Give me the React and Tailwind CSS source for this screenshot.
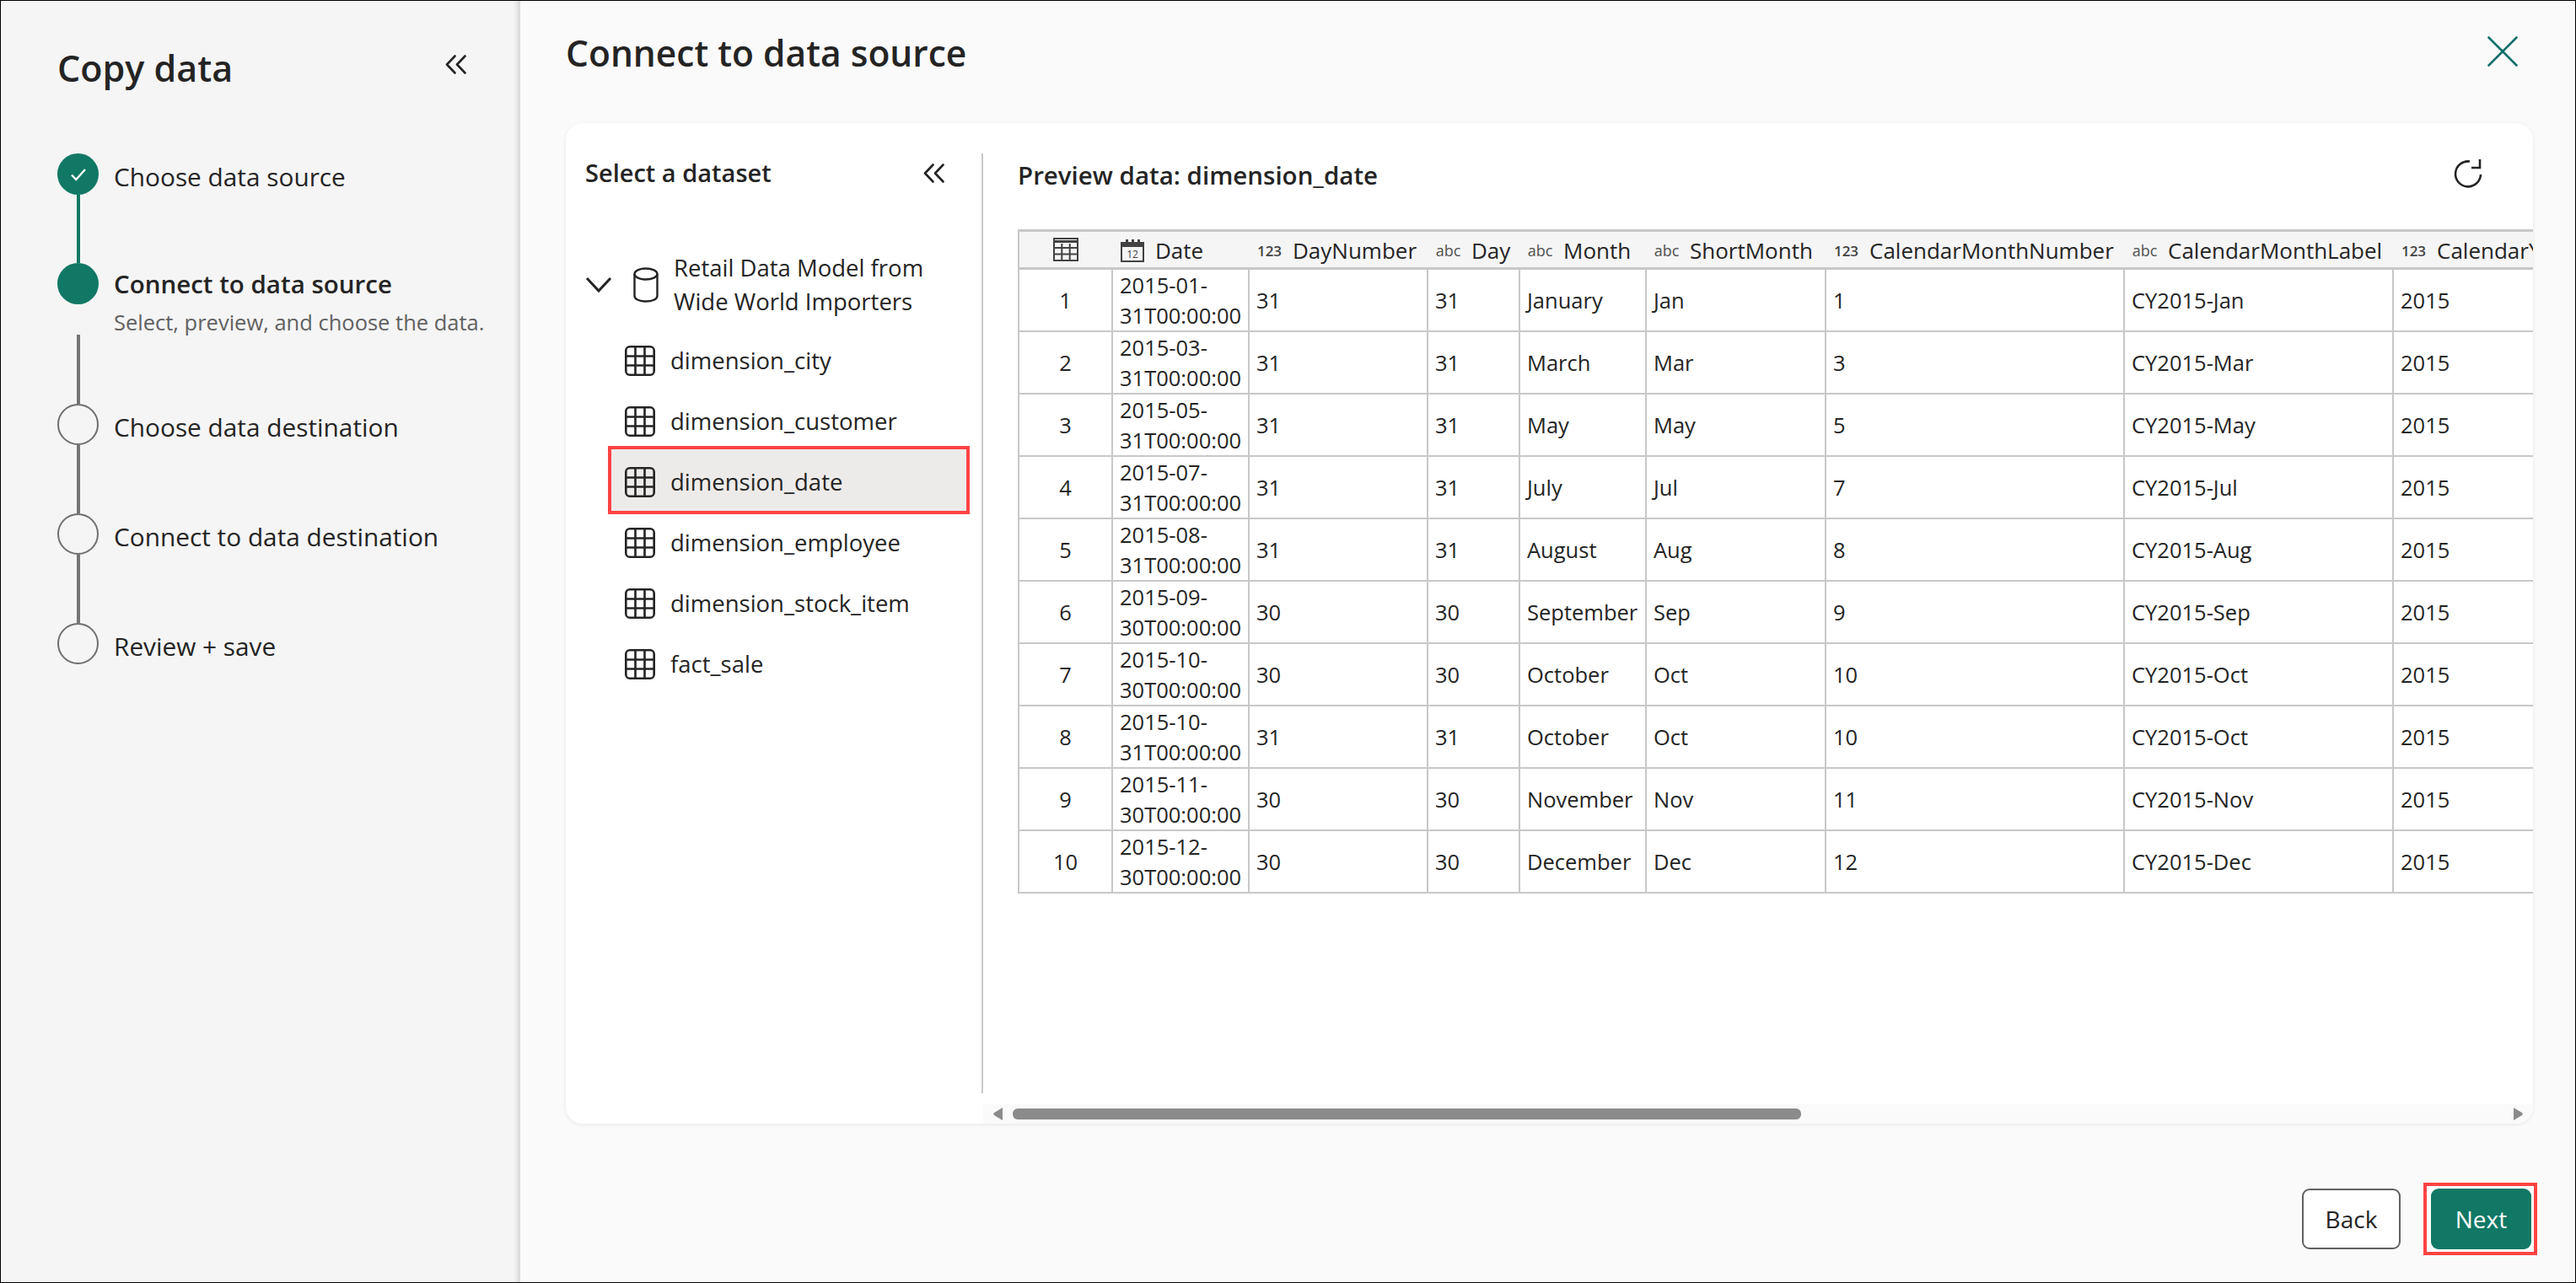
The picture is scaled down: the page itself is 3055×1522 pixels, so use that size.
const font = { fontFamily: '"Open Sans", "Noto Sans", sans-serif' }

const columns = [
  { w: 'w-[111px]' },
  { w: 'w-[162px]', label: 'Date', icon: 'date' },
  { w: 'w-[212px]', label: 'DayNumber', icon: '123' },
  { w: 'w-[109px]', label: 'Day', icon: 'abc' },
  { w: 'w-[150px]', label: 'Month', icon: 'abc' },
  { w: 'w-[213px]', label: 'ShortMonth', icon: 'abc' },
  { w: 'w-[354px]', label: 'CalendarMonthNumber', icon: '123' },
  { w: 'w-[319px]', label: 'CalendarMonthLabel', icon: 'abc' },
  { w: 'w-[260px]', label: 'CalendarYear', icon: '123' },
]

const rows = [
  ['2015-01-', '31T00:00:00', '31', '31', 'January', 'Jan', '1', 'CY2015-Jan'],
  ['2015-03-', '31T00:00:00', '31', '31', 'March', 'Mar', '3', 'CY2015-Mar'],
  ['2015-05-', '31T00:00:00', '31', '31', 'May', 'May', '5', 'CY2015-May'],
  ['2015-07-', '31T00:00:00', '31', '31', 'July', 'Jul', '7', 'CY2015-Jul'],
  ['2015-08-', '31T00:00:00', '31', '31', 'August', 'Aug', '8', 'CY2015-Aug'],
  ['2015-09-', '30T00:00:00', '30', '30', 'September', 'Sep', '9', 'CY2015-Sep'],
  ['2015-10-', '30T00:00:00', '30', '30', 'October', 'Oct', '10', 'CY2015-Oct'],
  ['2015-10-', '31T00:00:00', '31', '31', 'October', 'Oct', '10', 'CY2015-Oct'],
  ['2015-11-', '30T00:00:00', '30', '30', 'November', 'Nov', '11', 'CY2015-Nov'],
  ['2015-12-', '30T00:00:00', '30', '30', 'December', 'Dec', '12', 'CY2015-Dec'],
]

const datasets = ['dimension_city', 'dimension_customer', 'dimension_date', 'dimension_employee', 'dimension_stock_item', 'fact_sale']

function DoubleChevron() {
  return (
    <svg width="25" height="23" viewBox="0 0 25 23" fill="none" stroke="#242424" strokeWidth="2.6" strokeLinecap="round" strokeLinejoin="round">
      <path d="M11.5 1.5 2 11.5l9.5 10" />
      <path d="M23.5 1.5 14 11.5l9.5 10" />
    </svg>
  )
}

function GridIcon() {
  return (
    <svg width="36" height="36" viewBox="0 0 36 36" fill="none" stroke="#242424" strokeWidth="2.6" className="shrink-0">
      <rect x="1.3" y="1.3" width="33.4" height="33.4" rx="4.5" />
      <path d="M12.5 1.5v33M23.5 1.5v33M1.5 12.5h33M1.5 23.5h33" />
    </svg>
  )
}

function Step({ state, label, sub, line, gap }) {
  const done = state === 'done' || state === 'active'
  return (
    <div className={`flex gap-[18px] ${sub ? 'h-[167px]' : line ? 'h-[130px]' : 'h-[49px]'}`}>
      <div className="flex w-[49px] shrink-0 flex-col items-center">
        {done ? (
          <div className="flex h-[49px] w-[49px] shrink-0 items-center justify-center rounded-full bg-[#117865]">
            {state === 'done' && (
              <svg width="20" height="16" viewBox="0 0 20 16" fill="none" stroke="#fff" strokeWidth="2.4">
                <path d="M2 8.5 7.2 14 18 2" />
              </svg>
            )}
          </div>
        ) : (
          <div className="h-[49px] w-[49px] shrink-0 rounded-full border-2 border-[#6f6f6f]" />
        )}
        {line && <div className={`w-[4px] flex-1 ${gap ? 'mt-[36px]' : ''} ${state === 'done' ? 'bg-[#117865]' : 'bg-[#757575]'}`} />}
      </div>
      <div className={sub ? '' : 'pt-[3px]'}>
        <div className={`h-[49px] leading-[49px] text-[#242424] ${state === 'active' ? 'text-[29.5px] font-semibold' : 'text-[29.8px]'}`}>{label}</div>
        {sub && <div className="text-[25.5px] leading-[42px] text-[#616161]">{sub}</div>}
      </div>
    </div>
  )
}

function HeaderIcon({ kind }) {
  if (kind === 'date') {
    return (
      <svg width="28" height="28" viewBox="0 0 28 28" className="mr-[13px] ml-[1px] shrink-0">
        <path d="M1 5h26v22H1z" fill="none" stroke="#424242" strokeWidth="2" />
        <path d="M1 5h26v5H1z" fill="#424242" />
        <path d="M6 1h3v4H6zM13 1h3v4h-3zM20 1h3v4h-3z" fill="#424242" />
        <text x="14" y="23" textAnchor="middle" fontSize="12" fill="#424242" fontFamily="Open Sans">12</text>
      </svg>
    )
  }
  return <span className={`mr-[12px] w-[31px] shrink-0 leading-none ${kind === '123' ? 'text-[17px] font-semibold text-[#424242]' : 'text-[18px] font-normal text-[#505050]'}`}>{kind}</span>
}

function Preview() {
  return (
    <table className="w-[1890px] table-fixed border-collapse">
      <colgroup>
        {columns.map((c, i) => <col key={i} className={c.w} />)}
      </colgroup>
      <thead>
        <tr className="h-[45px] bg-[#f5f5f5]">
          {columns.map((c, i) => (
            <th key={i} className={`border-y-[3px] border-[#c8c8c8] p-0 font-medium ${i === 0 ? 'border-l-2' : ''}`}>
              {c.label ? (
                <div className="flex items-center whitespace-nowrap pt-[2px] pl-[9px] text-[26px] text-[#242424]">
                  <HeaderIcon kind={c.icon} />
                  {c.label}
                </div>
              ) : (
                <div className="flex justify-center">
                  <svg width="30" height="28" viewBox="0 0 30 28" fill="none" stroke="#424242" strokeWidth="2">
                    <path d="M1 1h28v26H1z" />
                    <path d="M1 4.5h28" strokeWidth="3" fill="none" />
                    <path d="M1 12h28M1 19.500h28M10.300 7v20M19.700 7v20" />
                  </svg>
                </div>
              )}
            </th>
          ))}
        </tr>
      </thead>
      <tbody>
        {rows.map((r, i) => (
          <tr key={i} className="h-[74px] text-[25.5px] text-[#242424]">
            <td className="border-2 border-[#c8c8c8] p-0 text-center">{i + 1}</td>
            <td className="border-2 border-[#c8c8c8] px-[8px] py-0 leading-[36px] whitespace-nowrap">{r[0]}<br />{r[1]}</td>
            {r.slice(2).map((v, j) => (
              <td key={j} className="border-2 border-[#c8c8c8] px-[8px] py-0 whitespace-nowrap">{v}</td>
            ))}
            <td className="border-2 border-[#c8c8c8] px-[8px] py-0">2015</td>
          </tr>
        ))}
      </tbody>
    </table>
  )
}

export default function App() {
  return (
    <div className="box-border flex h-[1522px] w-[3055px] overflow-hidden border border-black bg-[#fafafa]" style={font}>
      <aside className="w-[616px] shrink-0 bg-[#f5f5f5] pl-[67px] shadow-[inset_-7px_0_6px_-4px_rgba(0,0,0,0.14)]">
        <div className="flex h-[129px] items-start justify-between pr-[64px]">
          <h1 className="mt-[50px] text-[43px] leading-[60px] font-semibold text-[#242424]">Copy data</h1>
          <div className="mt-[64px]"><DoubleChevron /></div>
        </div>
        <div className="mt-[52px]">
          <Step state="done" label="Choose data source" line />
          <Step state="active" label="Connect to data source" sub="Select, preview, and choose the data." line gap />
          <Step label="Choose data destination" line />
          <Step label="Connect to data destination" line />
          <Step label="Review + save" />
        </div>
      </aside>

      <main className="flex min-w-0 flex-1 flex-col">
        <div className="flex h-[145px] shrink-0 items-start justify-between pr-[68px] pl-[54px]">
          <h2 className="mt-[32px] text-[42.5px] leading-[60px] font-semibold text-[#242424]">Connect to data source</h2>
          <svg width="36" height="36" viewBox="0 0 36 36" stroke="#0f6f6a" strokeWidth="2.6" strokeLinecap="round" className="mt-[42px]">
            <path d="M1.500 1.500l33 33M34.500 1.500l-33 33" />
          </svg>
        </div>

        <section className="mr-[50px] ml-[54px] flex h-[1187px] shrink-0 overflow-hidden rounded-[20px] bg-white shadow-[0_1px_4px_rgba(0,0,0,0.08)]">
          <div className="mt-[36px] h-[1115px] w-[495px] shrink-0 border-r-2 border-[#c8c8c8] pl-[23px]">
            <div className="flex h-[46px] items-center justify-between pr-[44px]">
              <span className="text-[29px] font-semibold text-[#242424]">Select a dataset</span>
              <DoubleChevron />
            </div>
            <div className="mt-[70px] flex items-center">
              <svg width="32" height="20" viewBox="0 0 32 20" fill="none" stroke="#242424" strokeWidth="3" className="shrink-0">
                <path d="M2 2l14 15L30 2" />
              </svg>
              <svg width="30" height="42" viewBox="0 0 30 42" fill="none" stroke="#242424" strokeWidth="2.4" className="ml-[25px] shrink-0">
                <ellipse cx="15" cy="8" rx="13.500" ry="6.500" />
                <path d="M1.500 8v26c0 4 6 6.500 13.500 6.500S28.500 38 28.500 34V8" />
              </svg>
              <div className="ml-[18px] text-[27.5px] leading-[40px] text-[#242424]">Retail Data Model from<br />Wide World Importers</div>
            </div>
            <div className="mt-[14px] mr-[14px] ml-[27px] flex flex-col">
              {datasets.map((d) => (
                d === 'dimension_date' ? (
                  <div key={d} className="-mt-[7px] -mb-[2px] box-border flex h-[81px] items-center gap-[18px] border-4 border-[#ff4343] bg-[#edebe9] pt-[5px] pl-[16px] text-[27.5px] text-[#242424]">
                    <GridIcon />
                    {d}
                  </div>
                ) : (
                  <div key={d} className="flex h-[72px] items-center gap-[18px] pl-[20px] text-[27.5px] text-[#242424]">
                    <GridIcon />
                    {d}
                  </div>
                )
              ))}
            </div>
          </div>

          <div className="flex min-w-0 flex-1 flex-col">
            <div className="flex h-[126px] shrink-0 items-start justify-between pr-[60px] pl-[41px]">
              <span className="mt-[42px] text-[29.5px] leading-[40px] font-semibold text-[#242424]">Preview data: dimension_date</span>
              <svg width="34" height="36" viewBox="0 0 34 36" fill="none" stroke="#242424" strokeWidth="2.6" className="mt-[42px]">
                <path d="M32 19A15 15 0 1 1 19 3.500" />
                <path d="M31 1v10H21" />
              </svg>
            </div>
            <div className="ml-[41px] min-h-0 flex-1 overflow-hidden">
              <Preview />
            </div>
            <div className="flex h-[23px] shrink-0 items-center bg-[#fafafa] pr-[12px] pl-[12px]">
              <svg width="11" height="15" viewBox="0 0 11 15" fill="#8b8b8b" className="shrink-0"><path d="M11 0v15L1 9c-1-.6-1-2.400 0-3z" /></svg>
              <div className="ml-[12px] h-[13px] w-[935px] rounded-[6px] bg-[#8b8b8b]" />
              <svg width="11" height="15" viewBox="0 0 11 15" fill="#8b8b8b" className="ml-auto shrink-0"><path d="M0 0v15l10-6c1-.6 1-2.400 0-3z" /></svg>
            </div>
          </div>
        </section>

        <div className="flex flex-1 items-start justify-end gap-[27px] pt-[70px] pr-[45px]">
          <button className="mt-[7px] h-[72px] w-[117px] rounded-[9px] border-2 border-[#616161] bg-white text-[28px] text-[#242424]">Back</button>
          <div className="box-border border-4 border-[#ff4343] bg-white py-[3px] pr-[3px] pl-[5px]">
            <button className="block h-[72px] w-[119px] rounded-[9px] bg-[#117865] text-[28px] text-white">Next</button>
          </div>
        </div>
      </main>
    </div>
  )
}
